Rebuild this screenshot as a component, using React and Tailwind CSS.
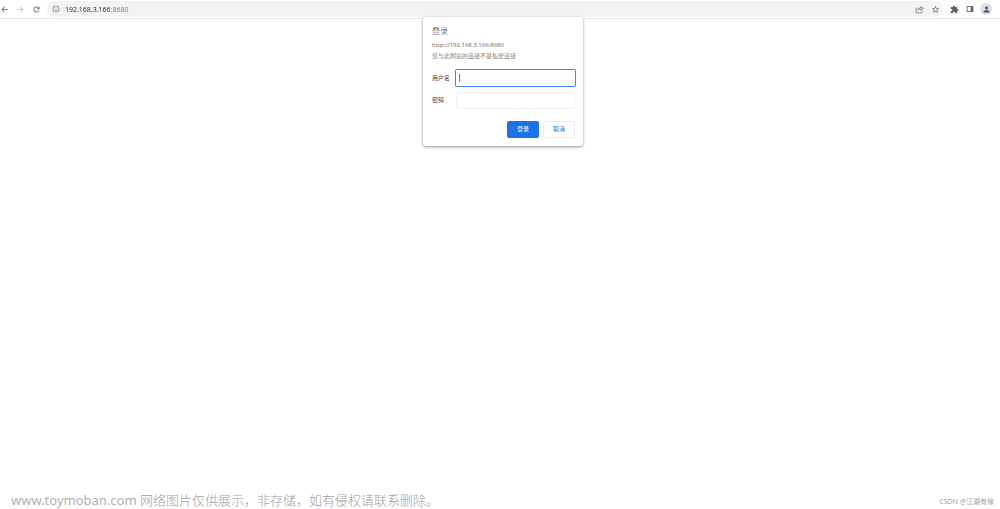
function IconButton({ label, children }) {
    return (
        <button type="button" aria-label={label} className="flex h-4 w-4 shrink-0 items-center justify-center rounded-full">
            {children}
        </button>
    );
}

function Icon({ d, size = "h-[9px] w-[9px]", className = "text-[#5f6368]" }) {
    return (
        <svg viewBox="0 0 24 24" fill="currentColor" className={`${size} shrink-0 ${className}`} aria-hidden="true">
            <path d={d} />
        </svg>
    );
}

const icons = {
    back: "M20 11H7.8l5.6-5.6L12 4l-8 8 8 8 1.4-1.4L7.8 13H20v-2z",
    forward: "M12 4l-1.4 1.4 5.6 5.6H4v2h12.2l-5.6 5.6L12 20l8-8z",
    reload: "M17.65 6.35A7.96 7.96 0 0 0 12 4a8 8 0 1 0 7.73 10h-2.08A6 6 0 1 1 12 6c1.66 0 3.14.69 4.22 1.78L13 11h7V4l-2.35 2.35z",
    info: "M11 7h2v2h-2V7zm0 4h2v6h-2v-6zm1-9a10 10 0 1 0 0 20 10 10 0 0 0 0-20zm0 18a8 8 0 1 1 0-16 8 8 0 0 1 0 16z",
    share: "M2 7h5v2H4v11h14v-4h2v6H2V7zM15 2l8 7-8 7v-4c-4 0-6.500 1-8.500 4C7.300 10.500 10 7 15 6V2zm2 4.400V7.800c-3 .3-5 1.200-6.300 2.800 1.800-.6 3.800-.7 6.300-.6v1.600L20 9l-3-2.600z",
    star: "M22 9.240l-7.190-.62L12 2 9.190 8.630 2 9.240l5.460 4.730L5.820 21 12 17.270 18.180 21l-1.630-7.030L22 9.240zM12 15.400l-3.760 2.270 1-4.280-3.320-2.880 4.380-.38L12 6.100l1.710 4.040 4.380.38-3.320 2.880 1 4.280L12 15.400z",
    puzzle: "M20.500 11H19V7a2 2 0 0 0-2-2h-4V3.500a2.500 2.500 0 0 0-5 0V5H4a2 2 0 0 0-2 2v3.800h1.500a2.700 2.700 0 0 1 0 5.400H2V20c0 1.100.9 2 2 2h3.800v-1.500a2.700 2.700 0 0 1 5.400 0V22H17a2 2 0 0 0 2-2v-4h1.500a2.500 2.500 0 0 0 0-5z",
    panel: "M2 3h20v18H2V3zm2.500 2.500v13H14v-13H4.500z",
    person: "M12 12a4 4 0 1 0 0-8 4 4 0 0 0 0 8zm0 2c-2.700 0-8 1.300-8 4v2h16v-2c0-2.700-5.300-4-8-4z",
};

function Toolbar() {
    return (
        <header className="flex h-[19px] items-center border-b border-[#e3e5e8] bg-white pr-[6px]">
            <nav className="flex w-[47px] shrink-0 items-center gap-[7px]">
                <button type="button" aria-label="后退"><Icon d={icons.back} /></button>
                <button type="button" aria-label="前进"><Icon d={icons.forward} className="text-[#babcbe]" /></button>
                <button type="button" aria-label="重新加载"><Icon d={icons.reload} /></button>
            </nav>
            <div className="flex h-4 min-w-0 flex-1 items-center rounded-full bg-[#f1f3f4] pl-[5px]">
                <Icon d={icons.info} size="h-2 w-2" />
                {/* host is darker than the port */}
                <input
                    type="text"
                    aria-label="地址"
                    defaultValue="192.168.3.166:8680"
                    className="ml-[5px] h-4 min-w-0 flex-1 bg-[linear-gradient(90deg,#202124_45px,#6f7377_45px)] bg-clip-text text-[7px] text-transparent outline-none"
                />
                <IconButton label="分享"><Icon d={icons.share} className="text-[#7b7f84]" /></IconButton>
                <IconButton label="收藏"><Icon d={icons.star} /></IconButton>
            </div>
            <div className="ml-[3px] flex items-center">
                <IconButton label="扩展程序"><Icon d={icons.puzzle} /></IconButton>
                <IconButton label="侧边栏"><Icon d={icons.panel} size="h-2 w-2" /></IconButton>
                <IconButton label="个人资料">
                    <span className="flex h-3 w-3 items-center justify-center rounded-full bg-[#dbe0ea]">
                        <Icon d={icons.person} className="text-[#46536e]" />
                    </span>
                </IconButton>
            </div>
        </header>
    );
}

function LoginDialog() {
    return (
        <form
            role="dialog"
            aria-labelledby="login-title"
            onSubmit={(e) => e.preventDefault()}
            className="w-40 rounded-[3px] bg-white py-2 pr-2 pl-[9px] text-[6px] text-[#3c4043] shadow-[0_1px_3px_rgba(0,0,0,0.45)]"
        >
            <h1 id="login-title" className="text-[8px] leading-3 font-light text-[#202124]">登录</h1>
            <p className="mt-[3px] leading-[11px] text-[#5f6368]">http://192.168.3.166:8680</p>
            <p className="leading-[11px] font-light text-[#3c4043]">您与此网站的连接不是私密连接</p>

            <div className="mt-2 grid grid-cols-[24px_1fr] items-center gap-y-[6px]">
                <label htmlFor="username">用户名</label>
                <div className="flex h-4 items-center rounded-[1px] bg-white px-[3px] ring-1 ring-[#3b86ee]">
                    <span className="h-2 w-px shrink-0 bg-[#777b80]" />
                    <input id="username" type="text" className="h-full w-full min-w-0 outline-none" />
                </div>
                <label htmlFor="password">密码</label>
                <input
                    id="password"
                    type="password"
                    className="h-[17px] w-full min-w-0 rounded-[2px] border border-[#f0f1f2] px-1 outline-none"
                />
            </div>

            <div className="mt-3 flex justify-end gap-1">
                <button type="submit" className="h-[17px] w-8 rounded-[2px] bg-[#1a73e8] text-white">登录</button>
                <button type="button" className="h-[17px] w-8 rounded-[2px] border border-[#eaecef] text-[#1a73e8]">取消</button>
            </div>
        </form>
    );
}

export default function App() {
    return (
        <div className="relative flex min-h-screen flex-col bg-white font-['Open_Sans','Noto_Sans_CJK_SC',sans-serif]" lang="zh-CN">
            <Toolbar />
            <main className="flex-1">
                <div className="absolute inset-x-0 top-[17px] flex justify-center pl-[6px]">
                    <LoginDialog />
                </div>
            </main>
            <footer className="flex items-center justify-between pr-[6px] pl-[11px] leading-[18px]">
                <p className="text-[13px] font-light text-[#a0a0a0]">
                    <span className="font-['Noto_Sans',sans-serif] font-normal text-[#b0b0b0]">www.toymoban.com</span> 网络图片仅供展示，非存储，如有侵权请联系删除。
                </p>
                <p className="self-end text-[7px] leading-[14px] text-[#a0a0a0]">CSDN @江湖有缘</p>
            </footer>
        </div>
    );
}
